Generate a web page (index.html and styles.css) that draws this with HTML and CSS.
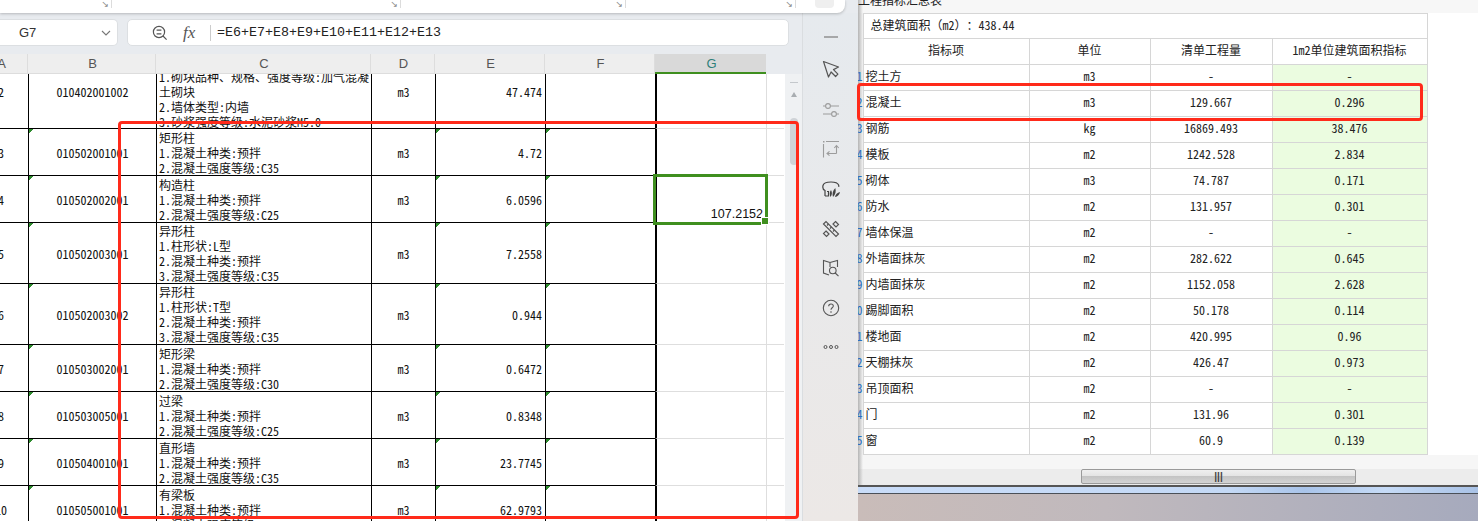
FILE: index.html
```html
<!DOCTYPE html>
<html lang="zh-CN">
<head>
    <meta charset="UTF-8">
    <title>工程指标汇总表</title>
    <link rel="stylesheet" href="styles.css">
</head>
<body>
    <!-- left window: spreadsheet -->
    <div class="app">
        <div class="ribbon">
            <div class="ribbon-group w1"><span class="launcher">↘</span></div>
            <div class="ribbon-group w2"><span class="launcher">↘</span></div>
            <div class="ribbon-group w3"><span class="launcher">↘</span></div>
            <div class="ribbon-group w4"><span class="launcher">↘</span></div>
            <div class="ribbon-chip"></div>
        </div>

        <div class="app-body">
            <div class="main">
                <div class="formula-row">
                    <div class="name-box">
                        <span>G7</span>
                        <svg width="10" height="6" viewBox="0 0 10 6"><path d="M1 1l4 4 4-4" fill="none" stroke="#777" stroke-width="1.1"/></svg>
                    </div>
                    <div class="formula-box">
                        <svg class="zoom-icon" width="16" height="16" viewBox="0 0 16 16"><circle cx="7" cy="7" r="5.6" fill="none" stroke="#555" stroke-width="1.2"/><path d="M4.6 5.2h4.8M4.6 8.8h4.8M11 11l3.6 3.6" fill="none" stroke="#555" stroke-width="1.2"/></svg>
                        <span class="fx">fx</span>
                        <span class="formula-sep"></span>
                        <span class="formula-text">=E6+E7+E8+E9+E10+E11+E12+E13</span>
                    </div>
                </div>

                <div class="sheet-wrap">
                    <div class="sheet">
                        <div class="row head">
                            <div class="hd">A</div><div class="hd">B</div><div class="hd">C</div><div class="hd">D</div><div class="hd">E</div><div class="hd">F</div><div class="hd active">G</div>
                        </div>

                        <div class="row h55">
                            <div class="c num">2</div>
                            <div class="c code">010402001002</div>
                            <div class="c desc">1.砌块品种、规格、强度等级:加气混凝<br>土砌块<br>2.墙体类型:内墙<br>3.砂浆强度等级:水泥砂浆M5.0</div>
                            <div class="c unit">m3</div>
                            <div class="c qty">47.474</div>
                            <div class="c"></div>
                            <div class="c g"></div>
                            <div class="c h"></div>
                        </div>
                        <div class="row h47">
                            <div class="c num">3</div>
                            <div class="c code tri">010502001001</div>
                            <div class="c desc">矩形柱<br>1.混凝土种类:预拌<br>2.混凝土强度等级:C35</div>
                            <div class="c unit">m3</div>
                            <div class="c qty tri">4.72</div>
                            <div class="c tri"></div>
                            <div class="c g"></div>
                            <div class="c h"></div>
                        </div>
                        <div class="row h47">
                            <div class="c num">4</div>
                            <div class="c code tri">010502002001</div>
                            <div class="c desc">构造柱<br>1.混凝土种类:预拌<br>2.混凝土强度等级:C25</div>
                            <div class="c unit">m3</div>
                            <div class="c qty tri">6.0596</div>
                            <div class="c tri"></div>
                            <div class="c g selected">107.2152</div>
                            <div class="c h"></div>
                        </div>
                        <div class="row h61">
                            <div class="c num">5</div>
                            <div class="c code tri">010502003001</div>
                            <div class="c desc">异形柱<br>1.柱形状:L型<br>2.混凝土种类:预拌<br>3.混凝土强度等级:C35</div>
                            <div class="c unit">m3</div>
                            <div class="c qty tri">7.2558</div>
                            <div class="c tri"></div>
                            <div class="c g"></div>
                            <div class="c h"></div>
                        </div>
                        <div class="row h61">
                            <div class="c num">6</div>
                            <div class="c code tri">010502003002</div>
                            <div class="c desc">异形柱<br>1.柱形状:T型<br>2.混凝土种类:预拌<br>3.混凝土强度等级:C35</div>
                            <div class="c unit">m3</div>
                            <div class="c qty tri">0.944</div>
                            <div class="c tri"></div>
                            <div class="c g"></div>
                            <div class="c h"></div>
                        </div>
                        <div class="row h47">
                            <div class="c num">7</div>
                            <div class="c code tri">010503002001</div>
                            <div class="c desc">矩形梁<br>1.混凝土种类:预拌<br>2.混凝土强度等级:C30</div>
                            <div class="c unit">m3</div>
                            <div class="c qty tri">0.6472</div>
                            <div class="c tri"></div>
                            <div class="c g"></div>
                            <div class="c h"></div>
                        </div>
                        <div class="row h47">
                            <div class="c num">8</div>
                            <div class="c code tri">010503005001</div>
                            <div class="c desc">过梁<br>1.混凝土种类:预拌<br>2.混凝土强度等级:C25</div>
                            <div class="c unit">m3</div>
                            <div class="c qty tri">0.8348</div>
                            <div class="c tri"></div>
                            <div class="c g"></div>
                            <div class="c h"></div>
                        </div>
                        <div class="row h47">
                            <div class="c num">9</div>
                            <div class="c code tri">010504001001</div>
                            <div class="c desc">直形墙<br>1.混凝土种类:预拌<br>2.混凝土强度等级:C35</div>
                            <div class="c unit">m3</div>
                            <div class="c qty tri">23.7745</div>
                            <div class="c tri"></div>
                            <div class="c g"></div>
                            <div class="c h"></div>
                        </div>
                        <div class="row h47">
                            <div class="c num">10</div>
                            <div class="c code tri">010505001001</div>
                            <div class="c desc">有梁板<br>1.混凝土种类:预拌<br>2.混凝土强度等级:C30</div>
                            <div class="c unit">m3</div>
                            <div class="c qty tri">62.9793</div>
                            <div class="c tri"></div>
                            <div class="c g"></div>
                            <div class="c h"></div>
                        </div>
                    </div>

                    <div class="vscroll">
                        <span class="vscroll-min"></span>
                        <span class="vscroll-up"></span>
                        <span class="vscroll-thumb"></span>
                    </div>
                </div>
            </div>

            <!-- icon strip -->
            <div class="side">
                <div class="side-item first"><svg width="16" height="2" viewBox="0 0 16 2"><path d="M1 1h14" stroke="#8a8a8a" stroke-width="1.4"/></svg></div>
                <div class="side-item second"><svg width="18" height="18" viewBox="0 0 18 18"><path d="M1.5 1.5l15 5.5-5 2.6 4.4 4.6-2.3 2.3-4.5-4.5-2.6 5z" fill="none" stroke="#555" stroke-width="1.2" stroke-linejoin="round"/></svg></div>
                <div class="side-item"><svg width="18" height="16" viewBox="0 0 18 16"><g fill="none" stroke="#9c9c9c" stroke-width="1.1"><circle cx="6" cy="4" r="2.4"/><circle cx="12" cy="12" r="2.4"/><path d="M1 4h2.600M8.400 4H17M1 12h8.600M14.400 12H17"/></g></svg></div>
                <div class="side-item"><svg width="18" height="18" viewBox="0 0 18 18"><g fill="none" stroke="#9c9c9c" stroke-width="1.1"><path d="M1.500 4v13.500M4 1.500h13"/><path d="M14.500 13.500V5.500M12.300 8l2.200-2.500L16.700 8M14.500 13.500H5M7.500 11.300L5 13.500l2.500 2.200"/></g><rect x="1" y="1" width="1.500" height="1.500" fill="#9c9c9c"/></svg></div>
                <div class="side-item"><svg width="18" height="16" viewBox="0 0 18 16"><path d="M3 15V9.500C1.200 8.800 .5 6.800 1 4.500 1.500 2 4 1 9 1c4 0 6.800.800 7.600 3 .200.600.200 1.200.100 1.800M3 15h3.500v-4.500H5" fill="none" stroke="#444" stroke-width="1.200"/><path d="M8.500 16C7.300 13.500 7.600 11 9 9c1.300 2.200 1.300 4.800-.500 7zM11 16c-1-3-.200-6.500 2.300-9 1 3.300.300 6.500-2.300 9zM13 16c.400-2.500 2.300-4.500 5-5-.300 2.700-2.300 4.600-5 5z" fill="#444"/></svg></div>
                <div class="side-item"><svg width="18" height="18" viewBox="0 0 18 18"><g fill="none" stroke="#555" stroke-width="1.200"><path d="M1.500 4L4 1.500 16.500 14 14 16.500z"/><path d="M5 5.500l1.500-1.500M8 8.500L9.500 7M11 11.500l1.500-1.500"/><path d="M13.500 1.500l3 3-2.500 2.500-3-3zM4 11l3 3-2.500 2.500-3-3z"/></g></svg></div>
                <div class="side-item"><svg width="18" height="18" viewBox="0 0 18 18"><g fill="none" stroke="#555" stroke-width="1.100"><path d="M8 3.500L1.500 1.500v12.500L7 16M8 3.500L15.500 1.500V8M8 3.500V8"/><circle cx="10.800" cy="11.500" r="3.300"/><path d="M13.200 14l3.300 3.200"/></g></svg></div>
                <div class="side-item"><svg width="18" height="18" viewBox="0 0 18 18"><circle cx="9" cy="9" r="7.700" fill="none" stroke="#555" stroke-width="1.100"/><path d="M6.700 7.200C6.700 5.800 7.700 5 9 5s2.300.800 2.300 2c0 1.800-2.300 1.800-2.300 3.800" fill="none" stroke="#555" stroke-width="1.100"/><circle cx="9" cy="13" r=".800" fill="#555"/></svg></div>
                <div class="side-item"><svg width="16" height="4" viewBox="0 0 16 4"><g fill="none" stroke="#555"><circle cx="2.500" cy="2" r="1.500"/><circle cx="8" cy="2" r="1.500"/><circle cx="13.500" cy="2" r="1.500"/></g></svg></div>
            </div>
        </div>
    </div>

    <!-- right window: report -->
    <div class="report">
        <div class="report-title"><span>工程指标汇总表</span></div>
        <table class="report-table">
            <colgroup><col class="col-no"><col class="col-name"><col class="col-unit"><col class="col-qty"><col class="col-index"></colgroup>
            <tr class="total"><td class="no"></td><td colspan="4" class="total-text">总建筑面积<span class="wide">（</span>m2<span class="wide">）：</span>438.44</td></tr>
            <tr><td class="no"></td><th>指标项</th><th>单位</th><th>清单工程量</th><th>1m2单位建筑面积指标</th></tr>
            <tr><td class="no">1</td><td class="name">挖土方</td><td>m3</td><td>-</td><td class="green">-</td></tr>
            <tr><td class="no">2</td><td class="name">混凝土</td><td>m3</td><td>129.667</td><td class="green">0.296</td></tr>
            <tr><td class="no">3</td><td class="name">钢筋</td><td>kg</td><td>16869.493</td><td class="green">38.476</td></tr>
            <tr><td class="no">4</td><td class="name">模板</td><td>m2</td><td>1242.528</td><td class="green">2.834</td></tr>
            <tr><td class="no">5</td><td class="name">砌体</td><td>m3</td><td>74.787</td><td class="green">0.171</td></tr>
            <tr><td class="no">6</td><td class="name">防水</td><td>m2</td><td>131.957</td><td class="green">0.301</td></tr>
            <tr><td class="no">7</td><td class="name">墙体保温</td><td>m2</td><td>-</td><td class="green">-</td></tr>
            <tr><td class="no">8</td><td class="name">外墙面抹灰</td><td>m2</td><td>282.622</td><td class="green">0.645</td></tr>
            <tr><td class="no">9</td><td class="name">内墙面抹灰</td><td>m2</td><td>1152.058</td><td class="green">2.628</td></tr>
            <tr><td class="no">10</td><td class="name">踢脚面积</td><td>m2</td><td>50.178</td><td class="green">0.114</td></tr>
            <tr><td class="no">11</td><td class="name">楼地面</td><td>m2</td><td>420.995</td><td class="green">0.96</td></tr>
            <tr><td class="no">12</td><td class="name">天棚抹灰</td><td>m2</td><td>426.47</td><td class="green">0.973</td></tr>
            <tr><td class="no">13</td><td class="name">吊顶面积</td><td>m2</td><td>-</td><td class="green">-</td></tr>
            <tr><td class="no">14</td><td class="name">门</td><td>m2</td><td>131.96</td><td class="green">0.301</td></tr>
            <tr><td class="no">15</td><td class="name">窗</td><td>m2</td><td>60.9</td><td class="green">0.139</td></tr>
        </table>
        <div class="report-gap"></div>
        <div class="hscroll"><div class="hscroll-thumb">|||</div></div>
        <div class="window-edge"></div>
        <div class="desktop"></div>
    </div>

    <!-- red annotation boxes drawn over the screenshot -->
    <div class="mark mark-sheet"></div>
    <div class="mark mark-report"></div>
</body>
</html>
```

FILE: styles.css
```css
/* === base === */
* {
    box-sizing: border-box;
}

body {
    margin: 0;
    width: 1478px;
    height: 521px;
    overflow: hidden;
    display: flex;
    position: relative;
    background: #fff;
    color: #111;
    font-family: "Noto Sans CJK SC", "Liberation Sans", sans-serif;
    font-feature-settings: "hwid" 1;
    font-size: 12px;
}

/* === left window === */
.app {
    width: 858px;
    height: 521px;
    flex: none;
    display: flex;
    flex-direction: column;
    background: #e8ebef;
}

.ribbon {
    width: 845px;
    height: 13px;
    flex: none;
    display: flex;
    background: #fff;
    border-radius: 0 0 8px 0;
    box-shadow: 0 1px 3px rgba(0, 0, 0, 0.22);
    position: relative;
    z-index: 2;
}

.ribbon-group {
    height: 8px;
    display: flex;
    justify-content: flex-end;
    align-items: center;
    border-right: 1px solid #dcdcdc;
    padding-right: 2px;
    overflow: hidden;
}

.w1 { width: 112px; }
.w2 { width: 289px; }
.w3 { width: 225px; }
.w4 { width: 170px; }

.launcher {
    font-family: "DejaVu Sans", sans-serif;
    font-size: 9px;
    line-height: 8px;
    color: #888;
}

.ribbon-chip {
    width: 19px;
    height: 8px;
    margin-left: 19px;
    background: #efefef;
    border-radius: 0 0 4px 4px;
}

.app-body {
    flex: 1;
    display: flex;
    min-height: 0;
}

.main {
    width: 802px;
    flex: none;
    display: flex;
    flex-direction: column;
    min-width: 0;
}

/* === formula bar === */
.formula-row {
    height: 41px;
    flex: none;
    display: flex;
    gap: 9px;
    padding: 6px 13px 8px 0;
}

.name-box {
    width: 118px;
    flex: none;
    display: flex;
    align-items: center;
    justify-content: space-between;
    padding: 0 6px 0 19px;
    background: #fff;
    border: 1px solid #dcdfe2;
    border-left: 0;
    border-radius: 0 5px 5px 0;
    font-family: "Liberation Sans", sans-serif;
    font-size: 13px;
    color: #333;
}

.formula-box {
    flex: 1;
    display: flex;
    align-items: center;
    background: #fff;
    border: 1px solid #dcdfe2;
    border-radius: 5px;
    padding-left: 24px;
}

.fx {
    margin-left: 15px;
    width: 16px;
    font-family: "Liberation Serif", serif;
    font-style: italic;
    font-size: 17px;
    color: #555;
}

.formula-sep {
    width: 1px;
    height: 16px;
    margin-left: 11px;
    background: #ccc;
}

.formula-text {
    margin-left: 6px;
    font-family: "Liberation Mono", monospace;
    font-feature-settings: normal;
    font-size: 13.33px;
    color: #222;
}

/* === sheet === */
.sheet-wrap {
    flex: 1;
    display: flex;
    min-height: 0;
}

.sheet {
    width: 785px;
    flex: none;
    overflow: hidden;
    background: #fff;
}

.row {
    display: grid;
    grid-template-columns: 54px 128px 215px 64px 110px 110px 111px 18px;
    margin-left: -26px;
}

.h55 { height: 55px; }
.h47 { height: 47px; }
.h61 { height: 61px; }

.head {
    height: 20px;
    background: #e8ebef;
    grid-template-columns: 54px 128px 215px 64px 110px 110px 111px;
}

.hd {
    display: flex;
    align-items: center;
    justify-content: center;
    padding-left: 2px;
    background: #eeeeee;
    border-right: 1px solid #dddddd;
    border-bottom: 1px solid #dddddd;
    font-family: "Liberation Sans", sans-serif;
    font-feature-settings: normal;
    font-size: 13px;
    color: #555;
}

.hd.active {
    background: #d9d9d9;
    border-right: 0;
    border-bottom: 2px solid #3f8f1f;
    color: #2f8079;
}

.c {
    display: flex;
    align-items: center;
    overflow: hidden;
    border-left: 1px solid #000;
    border-bottom: 1px solid #000;
    line-height: 15px;
    color: #111;
}

/* first row is scrolled partly out of view, so its values sit high */
.h55 .c {
    padding-bottom: 19px;
}

.num {
    justify-content: center;
    border-left: 0;
}

.code,
.unit {
    justify-content: center;
}

.desc {
    padding-left: 2px;
    white-space: nowrap;
}

.h47 .desc {
    padding-top: 1px;
}

.h55 .desc {
    padding-bottom: 4px;
}

.qty {
    justify-content: flex-end;
    padding-right: 3px;
}

/* little green corner of a text number */
.tri {
    background: linear-gradient(135deg, #2e8b2e 3px, transparent 3.5px) no-repeat 0 0 / 6px 6px;
}

.g {
    border-left: 2px solid #000;
    border-bottom: 1px solid #dedede;
}

.h {
    border-left: 1px solid #dedede;
    border-bottom: 1px solid #dedede;
}

.selected {
    position: relative;
    justify-content: flex-end;
    align-items: flex-end;
    overflow: visible;
    padding: 0 3px 0 0;
    outline: 3px solid #3f8f1f;
    outline-offset: -1px;
    font-family: "Liberation Sans", sans-serif;
    font-feature-settings: normal;
    font-size: 12.5px;
    color: #111;
}

.selected::after {
    content: "";
    position: absolute;
    right: -3px;
    bottom: -3px;
    width: 6px;
    height: 6px;
    background: #3f8f1f;
    border: 1px solid #fff;
}

.vscroll {
    flex: 1;
    display: flex;
    flex-direction: column;
    align-items: center;
    padding-top: 28px;
    background: linear-gradient(#e8ebef 20px, #eff1f3 20px);
}

.vscroll-min {
    width: 8px;
    height: 1px;
    background: #c4c8cc;
}

.vscroll-up {
    margin-top: 9px;
    border: 3px solid transparent;
    border-top: 0;
    border-bottom: 5px solid #a9adb1;
}

.vscroll-thumb {
    width: 8px;
    height: 47px;
    margin-top: 21px;
    background: #cfd3d7;
    border-radius: 4px;
}

/* === icon strip === */
.side {
    flex: 1;
    display: flex;
    flex-direction: column;
    align-items: center;
    padding-top: 4px;
    background: linear-gradient(#e6eaee, #e9e9ea 55%, #ece8e6);
    border-left: 1px solid #dadde0;
}

.side-item {
    height: 39.6px;
    flex: none;
    display: flex;
    align-items: center;
    justify-content: center;
}

.side-item.first {
    height: 40px;
}

.side-item.second {
    height: 24px;
}

.side-item:nth-child(3) {
    margin-top: 9px;
}

/* === right window === */
.report {
    flex: 1;
    display: flex;
    flex-direction: column;
    min-width: 0;
    background: linear-gradient(90deg, #b5b5b5, #f3f3f3 5px, #fff 6px);
}

.report-title {
    height: 13px;
    flex: none;
    overflow: hidden;
    background: linear-gradient(90deg, #b5b5b5, #f7f7f7 5px);
    line-height: 12px;
    color: #222;
}

.report-title span {
    display: block;
    margin-top: -6px;
}

.report-table {
    width: 569px;
    flex: none;
    table-layout: fixed;
    border-collapse: collapse;
    line-height: 14px;
}

.col-no { width: 5px; }
.col-name { width: 166px; }
.col-unit { width: 121px; }
.col-qty { width: 122px; }
.col-index { width: 155px; }

.report-table tr {
    height: 26px;
}

.report-table tr.total {
    height: 25px;
}

.report-table td,
.report-table th {
    padding: 0 0 3px;
    border: 1px solid #d6d6d6;
    text-align: center;
    font-weight: 400;
    color: #222;
}

.report-table .no {
    border: 0;
    border-right: 1px solid #d6d6d6;
    overflow: hidden;
    direction: rtl;
    white-space: nowrap;
    text-align: right;
    color: #2a6fc0;
}

.report-table .name {
    text-align: left;
    padding-left: 2px;
}

.report-table .total-text {
    text-align: left;
    padding-left: 7px;
    text-spacing-trim: space-all;
}

.wide {
    font-feature-settings: normal;
}

.report-table .green {
    background: #ebfce0;
}

.report-gap {
    height: 14px;
    flex: none;
    background: linear-gradient(90deg, #b5b5b5, #f6f6f6 5px);
}

.hscroll {
    height: 16px;
    flex: none;
    padding-left: 223px;
    background: linear-gradient(90deg, #b5b5b5, #ececec 5px);
}

.hscroll-thumb {
    width: 275px;
    height: 15px;
    border: 1px solid #9a9a9a;
    border-radius: 2px;
    background: linear-gradient(#efefef, #e4e4e4 45%, #c4c4c4 50%, #d4d4d4);
    font-family: "Liberation Sans", sans-serif;
    font-feature-settings: normal;
    font-size: 10px;
    font-weight: 700;
    line-height: 13px;
    text-align: center;
    color: #444;
}

.window-edge {
    height: 9px;
    flex: none;
    border-top: 2px solid #555;
    border-bottom: 1px solid #4a5058;
    background: linear-gradient(90deg, #c9dcf8, #c4d9f6 60%, #a9c4ea 72%, #c6dbf7 85%, #a9c2e6);
}

.desktop {
    flex: 1;
    background: linear-gradient(90deg, #c9bcb9, #c0b9bd 40%, #a6aabd);
}

/* === red annotation boxes === */
.mark {
    position: absolute;
    border: 3px solid #ff2a1a;
    border-radius: 4px;
    z-index: 5;
}

.mark-sheet {
    left: 118px;
    top: 121px;
    width: 681px;
    height: 398px;
}

.mark-report {
    left: 857px;
    top: 83px;
    width: 566px;
    height: 38px;
}
```
